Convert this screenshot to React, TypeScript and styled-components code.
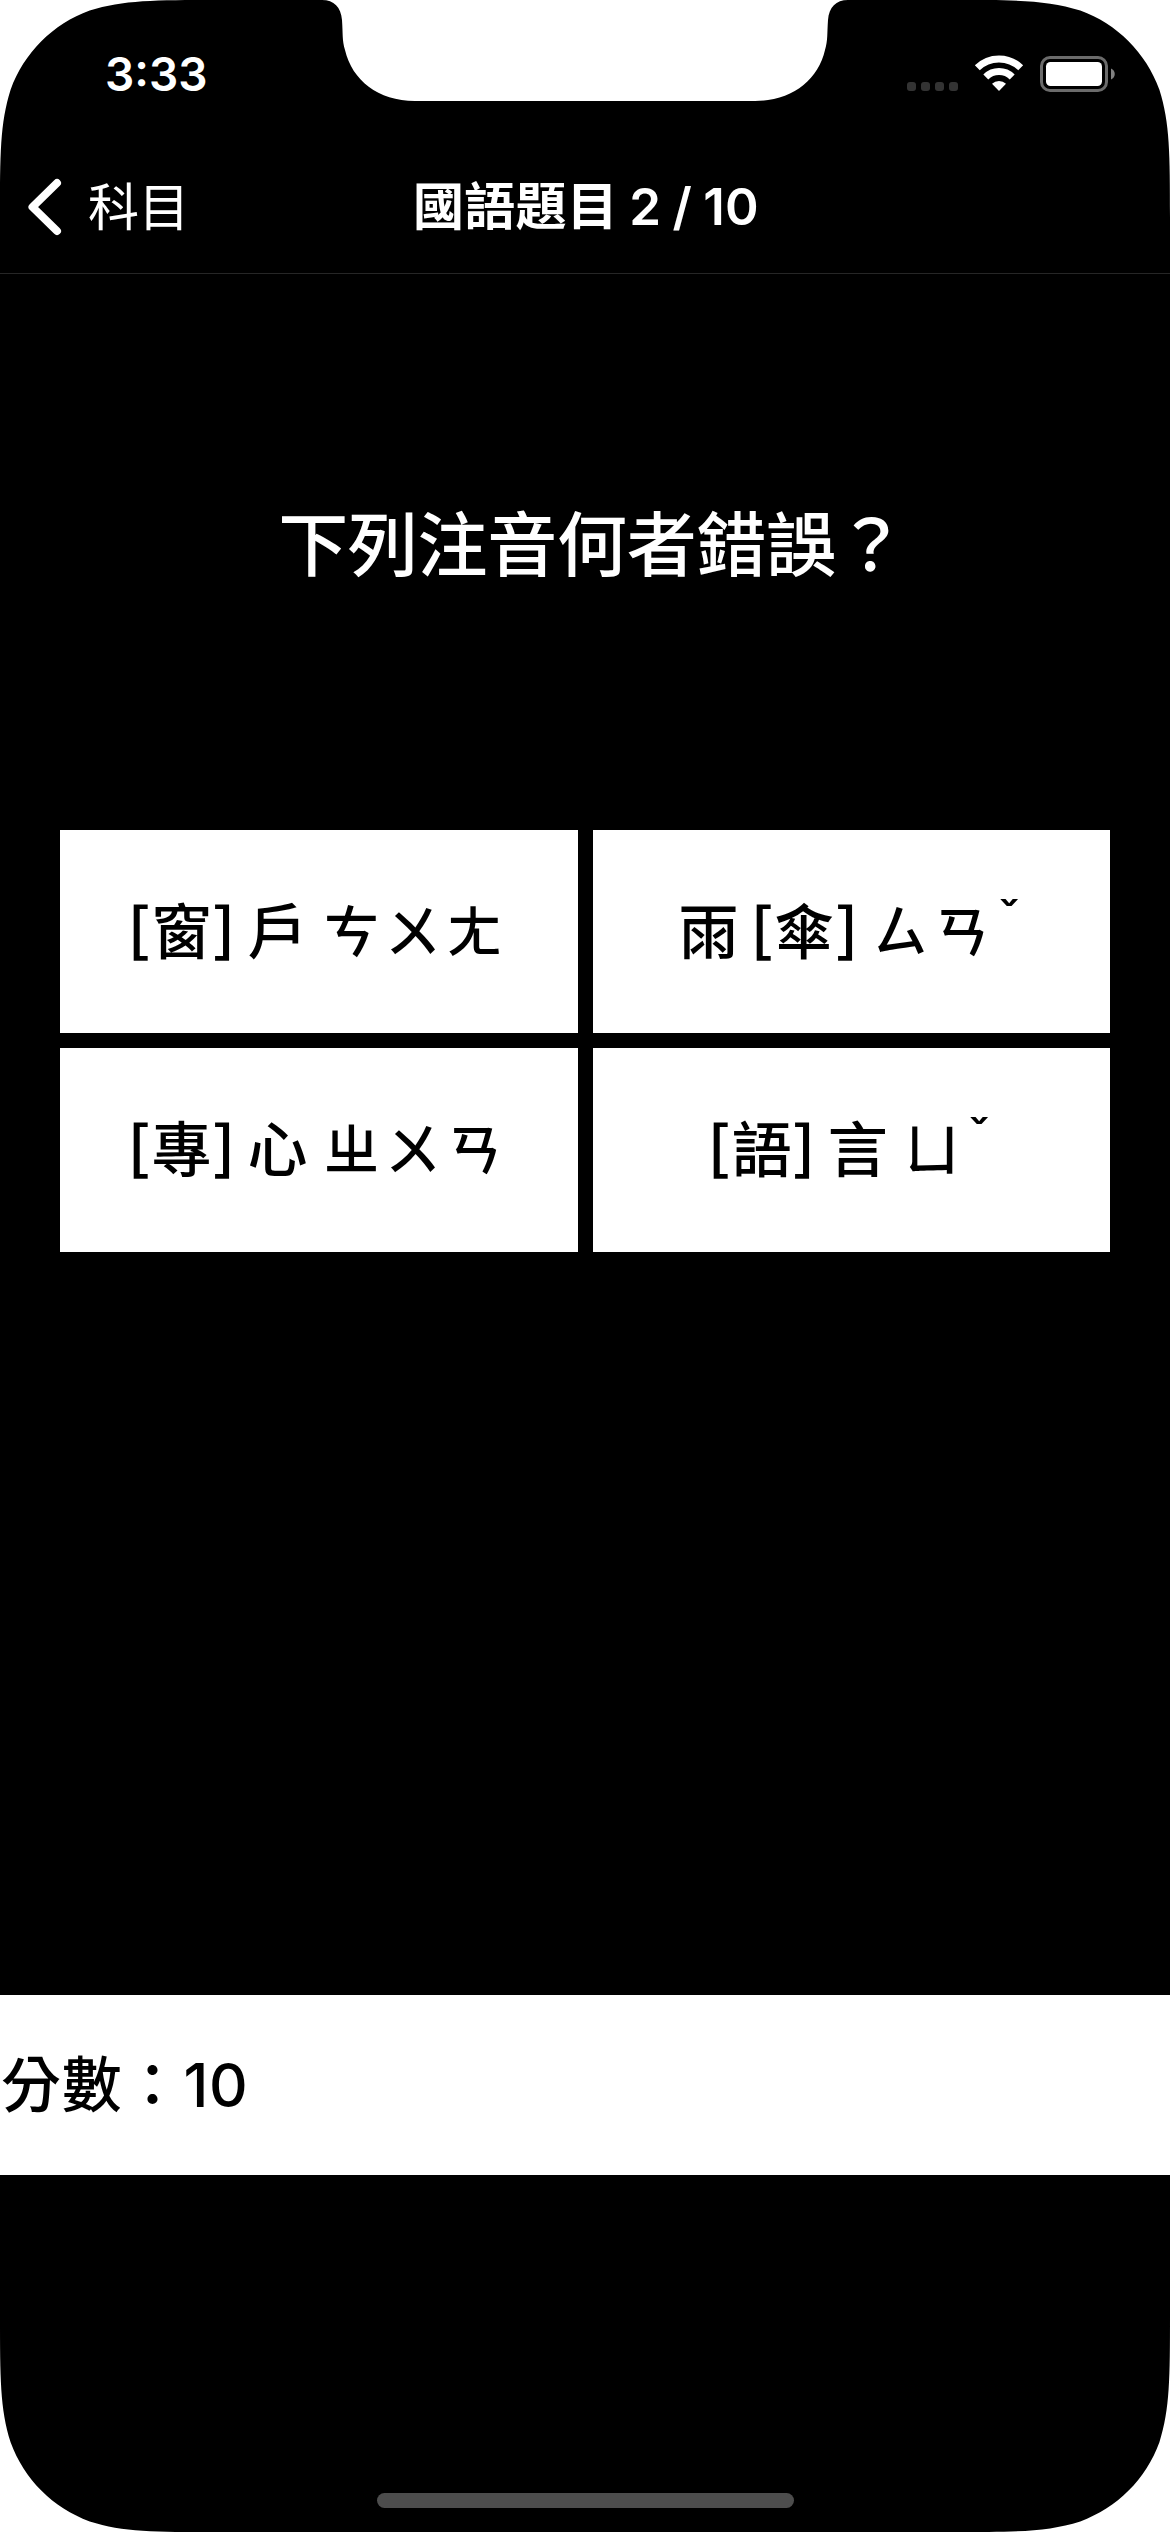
import React from "react";
import styled, { createGlobalStyle } from "styled-components";

const GlobalStyle = createGlobalStyle`
  *, *::before, *::after { box-sizing: border-box; }
  body { margin: 0; background: #000; }
`;

const Screen = styled.div`
  position: relative;
  display: flex;
  flex-direction: column;
  width: 1170px;
  height: 2532px;
  overflow: hidden;
  background: #000;
  color: #fff;
  font-family: Inter, "Noto Sans CJK TC", sans-serif;
  white-space: pre;
`;

const Bezel = styled.svg`
  position: absolute;
  inset: 0;
  width: 1170px;
  height: 2532px;
  pointer-events: none;
`;

const StatusBar = styled.div`
  display: flex;
  justify-content: space-between;
  height: 141px;
  padding: 55px 54px 0 105px;
`;

const Clock = styled.div`
  height: 38px;
  font-size: 46px;
  font-weight: 600;
  line-height: 38px;
`;

const StatusIcons = styled.svg`
  width: 210px;
  height: 40px;
`;

const NavBar = styled.header`
  display: grid;
  grid-template-columns: 1fr auto 1fr;
  align-items: center;
  height: 133px;
  border-bottom: 1px solid #262626;
`;

const BackButton = styled.button`
  display: flex;
  align-items: center;
  gap: 26px;
  padding: 0 0 0 27px;
  border: 0;
  background: none;
  color: #fff;
  font: 400 51px/74px Inter, "Noto Sans CJK TC", sans-serif;
`;

const BackLabel = styled.span`
  padding-top: 2px;
  letter-spacing: -0.5px;
`;

const Chevron = styled.svg`
  width: 35px;
  height: 58px;
`;

const Title = styled.h1`
  margin: 0;
  padding-left: 2px;
  font-size: 51px;
  font-weight: 600;
  line-height: 74px;
  letter-spacing: 0.3px;
  word-spacing: -2px;
`;

const Question = styled.h2`
  margin: 227px 0 0;
  padding-left: 14px;
  font-size: 70px;
  font-weight: 500;
  line-height: 90px;
  letter-spacing: -0.25px;
  text-align: center;
`;

const Answers = styled.div`
  display: grid;
  grid-template-columns: 518px 517px;
  grid-template-rows: 203px 204px;
  gap: 15px;
  margin: 239px 60px 0;
`;

const Answer = styled.button`
  padding: 0 2px 0 0;
  border: 0;
  background: #fff;
  color: #000;
  font: 500 60px/90px Inter, "Noto Sans CJK TC", sans-serif;
  letter-spacing: 1.5px;
  word-spacing: -5px;
  white-space: pre;
`;

const Bracket = styled.span<{ $before?: number; $after?: number }>`
  display: inline-block;
  margin-left: ${(p) => p.$before ?? 0}px;
  margin-right: ${(p) => p.$after ?? 0}px;
  font-weight: 400;
  transform: translateY(-3px) scale(1.2, 1.03);
`;

const Zhuyin = styled.span`
  margin-left: 2px;
  font-size: 56px;
  line-height: 0;
  letter-spacing: 5.5px;
  vertical-align: 2px;
`;

const Tone = styled.span`
  margin: 0 1px 0 3px;
  font-size: 51px;
  line-height: 0;
  vertical-align: 16px;
`;

const Score = styled.div`
  display: flex;
  align-items: center;
  height: 180px;
  margin-top: 743px;
  padding: 0 0 10px 1px;
  background: #fff;
  color: #000;
  font-size: 60px;
  font-weight: 500;
  letter-spacing: 0.8px;
`;

const HomeIndicator = styled.div`
  width: 417px;
  height: 15px;
  margin: auto auto 24px;
  border-radius: 8px;
  background: #4d4d4d;
`;

const answers = ["[窗]戶 ㄘㄨㄤ", "雨[傘]ㄙㄢˇ", "[專]心 ㄓㄨㄢ", "[語]言 ㄩˇ"];

function renderPart(part: string, index: number) {
  if (part === "[") return <Bracket key={index} $before={index > 0 ? 11 : 0}>[</Bracket>;
  if (part === "]") return <Bracket key={index} $after={11}>]</Bracket>;
  if (part === "ˇ") return <Tone key={index}>ˇ</Tone>;
  if (/^[ㄅ-ㄩ]+$/.test(part)) return <Zhuyin key={index}>{part}</Zhuyin>;
  return part;
}

const corner =
  "M0 0H217C154.6 0 123.3 0 89.7 10.6C52.9 24 24 52.9 10.6 89.7C0 123.3 0 154.6 0 217Z";
const notchHalf =
  "M322 0C334 0 341 7 342 20C343 34 342 40 345 50C352 80 378 101 415 101H586V0Z";

export default function App() {
  return (
    <>
      <GlobalStyle />
      <Screen>
        <StatusBar>
          <Clock>3:33</Clock>
          <StatusIcons viewBox="906 55 210 40">
            {[907, 921, 935, 949].map((x) => (
              <rect key={x} x={x} y="82" width="9" height="9" rx="3" fill="#333" />
            ))}
            <g fill="none" stroke="#fff" strokeWidth="7">
              <path d="M977.3 67.8A31 31 0 0 1 1020.7 67.8" />
              <path d="M985.8 76.9A18.8 18.8 0 0 1 1012.2 76.9" />
            </g>
            <path d="M992 83.8A10 10 0 0 1 1006 83.8L999 91Z" fill="#fff" />
            <rect x="1041.5" y="57.5" width="65" height="33" rx="8.5" fill="none" stroke="#6b6b6b" strokeWidth="3" />
            <rect x="1046" y="62" width="56" height="24" rx="4.5" fill="#fff" />
            <path d="M1111 68.5C1116 70.5 1116 77.5 1111 79.5Z" fill="#808080" />
          </StatusIcons>
        </StatusBar>
        <NavBar>
          <BackButton>
            <Chevron viewBox="0 0 35 58">
              <path d="M30 5L5.5 29L30 53" fill="none" stroke="#fff" strokeWidth="8" strokeLinecap="round" strokeLinejoin="round" />
            </Chevron>
            <BackLabel>科目</BackLabel>
          </BackButton>
          <Title>國語題目 2 / 10</Title>
          <span />
        </NavBar>
        <Question>下列注音何者錯誤？</Question>
        <Answers>
          {answers.map((text) => (
            <Answer key={text}>
              <span>{text.split(/([[\]ˇ]|[ㄅ-ㄩ]+)/).filter(Boolean).map(renderPart)}</span>
            </Answer>
          ))}
        </Answers>
        <Score>分數：10</Score>
        <HomeIndicator />
        <Bezel viewBox="0 0 1170 2532" fill="#fff">
          <path d={corner} />
          <path d={corner} transform="translate(1170 0) scale(-1 1)" />
          <path d={corner} transform="translate(0 2532) scale(1 -1)" />
          <path d={corner} transform="translate(1170 2532) scale(-1 -1)" />
          <path d={notchHalf} />
          <path d={notchHalf} transform="translate(1170 0) scale(-1 1)" />
        </Bezel>
      </Screen>
    </>
  );
}
